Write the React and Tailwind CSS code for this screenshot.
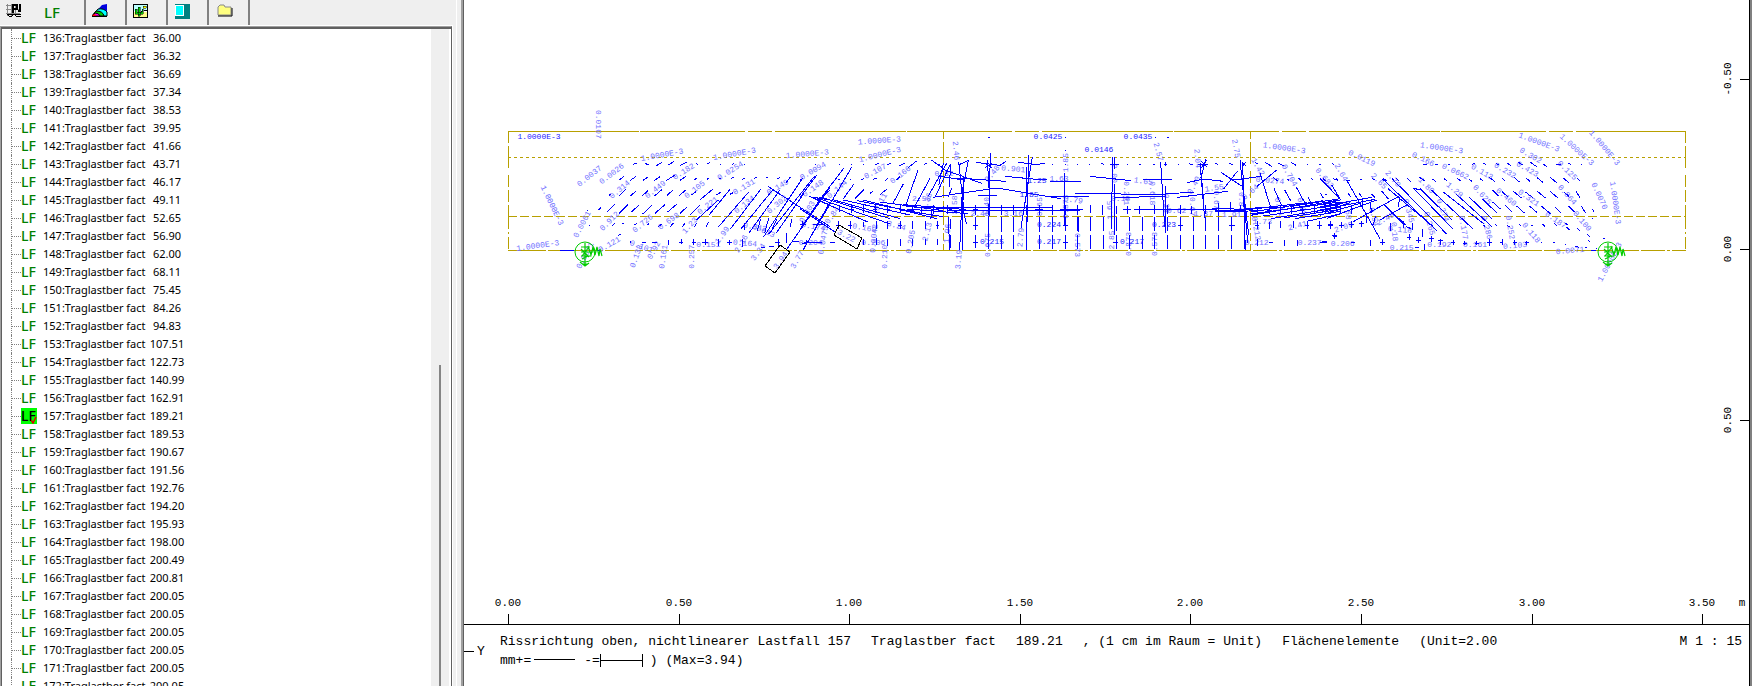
import { useState } from 'react';

const LOAD_CASES = [
  [136, '36.00'], [137, '36.32'], [138, '36.69'], [139, '37.34'], [140, '38.53'],
  [141, '39.95'], [142, '41.66'], [143, '43.71'], [144, '46.17'], [145, '49.11'],
  [146, '52.65'], [147, '56.90'], [148, '62.00'], [149, '68.11'], [150, '75.45'],
  [151, '84.26'], [152, '94.83'], [153, '107.51'], [154, '122.73'], [155, '140.99'],
  [156, '162.91'], [157, '189.21'], [158, '189.53'], [159, '190.67'], [160, '191.56'],
  [161, '192.76'], [162, '194.20'], [163, '195.93'], [164, '198.00'], [165, '200.49'],
  [166, '200.81'], [167, '200.05'], [168, '200.05'], [169, '200.05'], [170, '200.05'],
  [171, '200.05'], [172, '200.05'],
];

// Each zone of the beam has its own origin; its coordinates count thirds of a plot unit.
// Labels are [text, centre x, centre y, angle].
const ZONES = [
  {
    x: 490,
    y: 90,
    cracks: `M430 223l10-4M466 221l10 3M499 227l16-9M533 226l20-12M571 226l20-10M617 220l7 3M650 222l10-4M690 222h4M727 223l5-3M762 222h3M975 222h3
      M387 270l14-10M421 271l18-12M459 271l14-9M493 272l18-13M527 273l28-18M569 272l18-13M611 270l9-5M650 269l6-4M686 268l6-4M722 266l10-4M757 268l9-5M793 265l7-4M829 263l6-3M860 268l10-5M888 278l14-18
      M357 316l7-4M386 319l22-22M421 318l18-16M455 319l19-17M493 318l24-20M530 317l20-18M567 318l20-18M604 315l14-10M631 329l38-32M680 315l14-10M720 313l9-5
      M325 360l7-6M352 366l22-24M387 370l26-26M424 366l22-20M458 372l28-26M495 370l30-26M533 366l28-24M570 370l22-20M600 374l30-28M619 390l66-60M658 374l62-76
      M290 360h4M298 405h3M328 358l4-6M367 408l6-8M397 402l6-4M433 404l8-4M470 406l8-6M505 410l10-8M541 410l10-12M577 410l8-10M614 410l6-12M649 410l6-14M385 436l8-4
      M686 410l90-104M722 416l90-118M752 418l96-118M776 430l94-130M820 442l118-178M836 432l138-174M858 430l84-120M890 478l130-186M940 480l80-144
      M835 290l185 120M957 318l63 27M970 322l50 8M985 330l35-30
      M420 452v6M455 456h14M486 458h14M536 450v14M574 448v14M568 456h12M611 448v16M605 456h12M645 448v18M637 456h18M684 448v20M718 450v16M712 456h14M757 448v22
      M812 472h14M838 470h14M864 446v24M856 456h14M910 454h18M936 460h16M970 458h24M812 386l-10 36M836 385l-12 44M860 388l-18 40M906 388l-6 24M930 404h18M937 394v20M970 404h30M888 430v28M762 400v20
      M210 481h42M322 481h10`,
    labels: [
      ['0.0107', 326, 103, 90], ['1.0000E-3', 516, 193, -10], ['1.0000E-3', 733, 190, -10], ['1.0000E-3', 952, 190, -5],
      ['0.0037', 297, 257, -38], ['0.0026', 364, 250, -38], ['0.182', 580, 243, -32], ['0.0254', 720, 241, -32], ['0.0094', 968, 241, -30],
      ['1.0000E-3', 188, 345, 64], ['0.314', 388, 297, -40], ['0.449', 495, 297, -38], ['0.105', 613, 297, -38], ['0.131', 761, 289, -30],
      ['0.149', 862, 290, -30], ['0.148', 968, 294, -35], ['0.0061', 275, 402, -62], ['0.912', 357, 392, -45], ['0.726', 457, 399, -40],
      ['0.698', 535, 392, -35], ['1.23', 598, 405, -48], ['0.221', 652, 345, -38], ['0.134', 762, 342, -38], ['0.302', 860, 342, -40],
      ['1.99', 695, 434, -55], ['0.642', 795, 410, 10], ['0.613', 822, 420, 25], ['1.0000E-3', 143, 465, -8], ['0.121', 357, 462, -30],
      ['0.101', 455, 468, 20], ['0.138', 437, 498, -70], ['0.92', 490, 480, -60], ['0.161', 518, 500, -82], ['0.257', 602, 500, -90],
      ['0.151', 655, 463, 0], ['0.164', 765, 458, 5], ['2.16', 752, 460, -60], ['3.34', 803, 485, -55], ['3.94', 870, 510, -55],
      ['3.77', 920, 508, -60], ['0.303', 950, 365, -60], ['0.204', 962, 455, 0], ['0.0475', 998, 450, -80], ['0.174', 970, 408, 10],
      ['0.0071', 284, 495, -62],
    ],
  },
  {
    x: 800,
    y: 110,
    cracks: `M117 162h3M153 163h4M190 163h3M226 165l10-5M262 164l12-6M298 168l18-10M325 172l25-19M372 163l8-4M394 150l36 25M414 163h6M475 165l33-15M528 157l72 9M600 166l18-12M655 157l57 7M712 164l23-5M757 162h3M795 162h4M565 82h4M795 82h3M796 120h3
      M0 210l10-6M115 207h4M150 207h4M182 210l10-4M218 208l12-4M255 212l10-8M290 210l10-10M280 278l30-56M318 284l36-104M345 288l45-83M385 258l55-98M405 262l45-97
      M0 262l50-66M60 268l72-94M10 418L156 170M0 358l62-92M130 266l32-44M165 266l27-28M210 250l10-6M240 254l20-16
      M0 296l105 70M30 260l173 76M46 262l224 80M64 262l206 64M95 268l205 58M130 270l200 45M172 272l193 38M190 270l220 56M240 276l190 26M310 284l160 12M318 290l180 8M320 297l185 14M300 300l130 20M60 262l-10 12
      M117 285v22M155 284v24M190 286v22M226 284v24M262 284v26M300 286v24M336 288v22M365 288v22M401 286v26M396 300l-4 28M441 286v26M430 290l40 16M150 297h12M220 297h12M258 297h12M331 300h12M395 297h12
      M115 333v24M108 346h14M150 333v24M143 345h14M190 336v16M228 334v24M262 334v24M300 333v24M293 345h14M338 333v24M375 334v22M412 333v24M408 345h10M450 326v30
      M20 390v14M12 398h40M90 397h14M58 397h8M190 386v20M228 384v22M262 386v22M300 386v22M337 386v22M375 386v18M413 386v20M450 375v40
      M447 232l6-70M446 320l2 100M476 155l16 150M505 150l-18 90l-8 180M490 200l-3 220M490 305l10 38M571 130l-6 285M562 150l6 100M686 135l-7 285M697 140l-34 213M679 170v90M794 190v155M430 160l-14 66
      M398 262l192-28l192 32M415 198l75 12M430 178l115 42M470 204l148 10M614 199l96 9h30M750 213h90M740 260h100M430 292l326 2M440 300h400M534 255h56M554 160l22 14M554 174l22-14M455 235l-10 25
      M526 284v30M518 298h16M565 282v32M604 284v30M640 284v30M679 284v30M718 284v30M706 297h24M757 286v30M750 300h14
      M526 320v40M518 345h16M565 320v45M604 320v45M640 320v45M679 320v45M718 320v45M757 320v45M796 326v38M788 345h16
      M526 376v38M518 397h16M565 376v42M604 376v42M640 376v42M679 376v42M718 376v42M757 376v42M796 376v42M788 397h16M835 320v45`,
    labels: [
      ['1.0000E-3', 238, 90, -4], ['1.0000E-3', 239, 132, -14], ['0.107', 225, 182, -28], ['0.166', 300, 193, -38], ['0.144', 110, 236, -40],
      ['0.84', 95, 315, -55], ['3.22', 140, 376, 28], ['0.169', 193, 352, 10], ['0.206', 220, 395, 0], ['0.0042', 220, 385, -85],
      ['0.210', 252, 440, -90], ['3.24', 290, 345, 15], ['0.205', 330, 395, -80], ['2.13', 380, 365, -75], ['2.58', 365, 265, 0],
      ['0.82', 432, 188, 0], ['2.46', 470, 122, 85], ['3.58', 462, 285, -90], ['1.06', 440, 370, -85], ['3.19', 474, 448, -85],
      ['2.46', 540, 310, 0], ['1.40', 558, 290, -90], ['0.675', 562, 405, -90], ['0.901', 640, 175, 5], ['1.63', 777, 205, 0],
      ['1.85', 794, 158, -90], ['3.16', 640, 308, 0], ['0.65', 718, 290, -90], ['2.79', 660, 382, -85], ['0.573', 794, 290, -90],
      ['0.79', 820, 268, 8], ['0.11', 240, 275, -60], ['0.48', 575, 190, -50], ['0.36', 378, 275, -70],
    ],
  },
  {
    x: 1060,
    y: 110,
    cracks: `M14 82h3M15 121h3M285 82h3M321 82h6M14 162h4M52 163h3M88 163h3M124 160l8 4M150 163h28M164 148v28M202 163h3M238 163h6M280 162h4M312 162h10M316 156v12M353 162h5M386 160l12 5M414 163h30M424 154l18 18M440 150l-16 24M466 160l8 4M508 160l10 5M546 158l12 10M558 156l-12 16
      M584 156l10 6M615 157l20 12M655 160l16 8M694 158l14 8M740 163h4M777 162h6M815 160l6 4
      M640 203l14 10M680 206l8 6M716 204l8 8M754 206l6 4M790 206l6 6M820 206l8 4M600 190l32 102M642 235l22 50M674 240l18 32M708 230l30 55M744 262l8 16M782 250l8 14M815 225l25 41M590 230l60-50
      M14 190v158M158 142l-4 216M162 142v20M163 222v153M302 156l12 194M316 228v142M420 160l14 165M438 148l-16 57M540 150l14 140l9 108M548 160l8 260M544 190l22 184M426 220l4 46
      M0 213h62M0 259h86M46 250l268 4M90 199l124 13M249 208h88M314 252l90-6M352 262l152-18M164 262l152-2M382 218l48-11l60 7M520 210l84-11M484 188l61 40M490 238l42-54M222 298h248M0 299h68M456 295l99 3M466 306l134-4M466 300h90
      M554 300l186-22M574 306l216-34M572 316l266-46M571 312l269-36M610 318l230-34M632 326l208-34M672 324l168-26M706 326l134-22M740 334l100-22M556 295l120-4M690 290l150-24
      M16 286v30M52 286v30M90 286v24M128 284v30M169 288v24M202 288v24M190 298h24M237 288v24M283 286v26M322 286v26M362 286v26M394 288v24M437 286v26M474 280v38M512 276v28M540 286v20
      M592 290v24M628 288v24M660 288v20M694 286v26M726 288v22M762 286v24M796 282v26M830 280v20M620 300h16M720 298h14M824 292h14
      M16 322v42M8 346h16M52 322v42M91 322v42M130 322v42M169 322v42M208 322v42M246 322v42M283 322v42M322 322v42M362 322v42M354 346h16M400 322v42M437 322v42M475 322v42M514 322v42M506 346h18M553 322v42
      M16 376v42M8 397h14M52 376v42M91 376v42M130 376v42M169 376v42M160 397h14M208 376v42M246 376v42M283 376v42M322 376v42M362 376v42M400 376v42M437 376v42M475 376v42M514 376v42M553 376v42
      M592 334v24M586 345h12M628 336v22M662 334v20M700 334v20M742 334v24M736 345h12M778 333v24M770 345h14M811 333v22M804 342h14
      M592 388v20M626 397h14M674 390v18M712 390v18M786 394h14M824 370v16M818 378h14`,
    labels: [
      ['2.57', 297, 125, 75], ['2.04', 414, 145, 85], ['2.75', 530, 115, 80], ['1.0000E-3', 673, 112, 8], ['1.65', 250, 212, 8],
      ['2.00', 165, 190, 90], ['0.291', 200, 250, 90], ['0.618', 278, 250, 90], ['1.65', 148, 300, -90], ['0.62', 350, 300, 0],
      ['0.67', 398, 290, 90], ['0.67', 470, 270, 90], ['1.55', 462, 232, -8], ['1.37', 430, 308, 0], ['1.91', 515, 312, 0],
      ['0.573', 53, 405, 90], ['0.573', 204, 402, -90], ['0.573', 282, 402, -90], ['2.85', 152, 390, -90], ['0.0274', 630, 210, 5],
      ['0.704', 690, 195, 60], ['0.683', 795, 203, 50], ['1.42', 595, 170, 60], ['0.212', 590, 355, 80], ['0.212', 590, 395, 0],
      ['0.237', 749, 395, 0], ['2.41', 712, 345, -15], ['1.73', 607, 332, 0], ['0.64', 570, 245, -40], ['0.40', 400, 225, -60],
      ['0.38', 322, 280, 90], ['0.87', 545, 275, 90], ['0.11', 660, 290, 75], ['0.09', 728, 290, 75], ['0.15', 182, 264, 0],
    ],
  },
  {
    x: 1320,
    y: 110,
    cracks: `M308 163h12M345 163h10M383 162h6M420 162h4M456 164l8-4M490 160l8 4M528 160l10 6M562 160l10 6M594 156l16 10M630 156l20 14M670 162l10 8M708 162h14M745 160l8 4M783 162h3
      M10 208l8 5M48 206l6 5M85 210h6M120 207h5M155 203l8 7M190 206l10 6M228 203l8 10M262 206l10 8M298 202l16 10M335 206l12 8M372 206l10 6M410 204l12 8M446 206l10 8M480 206l10 6M508 202l18 14M545 204l10 8M582 202l16 14M618 204l12 10M650 202l20 16M690 202l20 16M730 204l16 14M772 206l8 6
      M184 242l22 26M188 207l162 155M216 206l164 166M204 236l136 114M240 230l26 26M280 234l120 124M300 236l96 94M334 240l124 116M370 246l122 96M408 252l108 98M446 260l70 66M488 268l44 42M80 210l100 176M190 282l64 64M216 308l42 36M300 240l-14-4M0 205l64 66
      M518 240l18 18M545 244l20 18M580 244l24 20M616 246l24 18M652 244l24 20M690 244l24 20M732 246l16 14M768 244l12 18M15 252h6M48 250l6 8M85 250l6 10M118 250l6 10M155 252l10 10
      M518 276l24 22M556 286l20 20M590 288l24 22M628 288l24 20M664 288l28 24M704 290l18 18M745 288l18 18M784 288l12 20M816 296l6 8M816 326h4M850 384h4
      M488 344l8 6M524 342l8 6M560 345l10 6M596 342l8 5M632 344l8 5M668 342l8 8M702 340l8 6M736 340l8 5M740 352l8 8M772 356l8 6M800 372l10 8M804 390l6 6M764 408l12 4M796 412h4M664 398h3M700 398h4M735 402h4M828 414h3
      M0 284l60-14M0 290l155-28M0 300l165-32M20 326l150-56M0 316l120-36M0 294l90-20M0 308l90-30M100 335l136-76M134 316l46-26M180 330l82-46
      M0 345h6M30 333v24M24 345h14M65 336v18M58 345h14M42 370v18M36 377h14M94 334v20M88 342h14M118 340h14M124 332v20M0 397h20M92 397h14M152 390v18M186 388v18M180 397h14M210 340v24M250 333v22M278 340v20M258 350l16 6M268 372v18M260 382h14M295 382v18M288 390h14M306 358v22M334 378v18M328 386h14M284 412h14M313 402v18M355 392h14M362 388v16M400 390v16M392 398h14M434 392v14M428 400h12M470 392v14M464 400h12M508 388v20M502 398h14M546 388v18M540 398h10M584 390v16M578 398h14M620 392v12M614 398h12
      M30 285v28M62 285v24M94 285v26M128 268v30M150 280l6 30M138 310v30M240 260l-6 30M160 345l6-26M814 421h14`,
    labels: [
      ['0.0119', 126, 143, 25], ['0.166', 310, 146, 25], ['1.0000E-3', 365, 112, 8], ['1.0000E-3', 658, 95, 20], ['1.0000E-3', 772, 118, 42],
      ['1.0000E-3', 855, 112, 50], ['0.302', 633, 135, 30], ['0.0662', 407, 183, 25], ['0.113', 487, 184, 30], ['0.232', 556, 180, 30],
      ['0.423', 623, 176, 30], ['0.125', 743, 180, 45], ['2.64', 65, 186, 60], ['2.65', 178, 212, 45], ['2.70', 220, 205, 50],
      ['1.80', 320, 225, 45], ['1.29', 405, 238, 40], ['0.625', 488, 253, 48], ['0.460', 560, 260, 40], ['0.321', 627, 262, 35],
      ['0.864', 743, 253, 48], ['0.0070', 840, 257, 65], ['1.0000E-3', 888, 278, 82], ['0.187', 708, 328, 35], ['0.100', 788, 332, 50],
      ['0.118', 635, 367, 50], ['0.252', 572, 352, 80], ['0.286', 502, 352, 75], ['0.177', 432, 353, 80], ['0.274', 370, 300, 70],
      ['0.265', 330, 340, 75], ['0.345', 268, 302, 75], ['0.18', 225, 365, 85], ['0.54', 163, 320, 75], ['0.68', 85, 300, 85],
      ['2.48', 195, 325, -30], ['2.09', 70, 350, -20], ['0.118', 240, 357, 5], ['0.206', 68, 398, 0], ['0.215', 245, 410, 0],
      ['0.192', 358, 402, 0], ['0.161', 465, 402, 0], ['0.103', 585, 405, -5], ['0.0071', 750, 420, -5], ['1.0000E-3', 868, 455, -62],
    ],
  },
];

// Values on horizontal elements, [text, centre x, centre y] in plot units.
const PLAIN_VALUES = [
  ['1.0000E-3', 539, 137], ['0.0425', 1048, 137], ['0.0435', 1138, 137], ['0.0146', 1099, 150],
  ['1.25', 1037, 181], ['1.85', 1029, 195], ['0.224', 1049, 225], ['0.217', 1049, 242],
  ['0.215', 992, 242], ['0.223', 1164, 225], ['0.217', 1132, 242],
];

const X_TICKS = [
  ['0.00', 508], ['0.50', 679], ['1.00', 849], ['1.50', 1020],
  ['2.00', 1190], ['2.50', 1361], ['3.00', 1532], ['3.50', 1702],
];

const Y_TICKS = [['-0.50', 79], ['0.00', 249], ['0.50', 420]];

function GridIcon() {
  return (
    <svg width="16" height="14" viewBox="0 0 16 14" shapeRendering="crispEdges" fill="none">
      <path d="M0 1.5h12M0 5.5h13M0 9.5h14M1.5 0v12M5.5 0v12M9.5 0v12" stroke="#888" />
      <path d="M7 0v9M8 1h4M11 1v4M8 5h4M14 0v7M12 7h3" stroke="#000" strokeWidth="2" />
      <path d="M1 10l2 2h3l2-2l2 2h5M2 10h13" stroke="#000" />
    </svg>
  );
}

function ContourIcon() {
  return (
    <svg width="16" height="13" viewBox="0 0 16 13">
      <path d="M0 12L10 1l5-1v12z" fill="#0000e0" />
      <path d="M0 12L6 5q6-1 9 3v4z" fill="#0ff" stroke="#000" />
      <path d="M0 12l4-5q7 0 8 5z" fill="#0c0" stroke="#000" />
      <path d="M0 12l3-3q4 0 5 3z" fill="#f0f" stroke="#000" />
      <path d="M0 12l2-2q2 0 2 2z" fill="#f00" />
      <path d="M0 12.5h15" stroke="#000" />
    </svg>
  );
}

function CactusIcon() {
  return (
    <svg width="16" height="15" viewBox="0 0 16 15" shapeRendering="crispEdges">
      <path d="M0.5 0.5h14v13h-14z" fill="#fff" stroke="#000" />
      <path d="M1 1h13v6H1z" fill="#bff" />
      <path d="M1 8h13v5H1z" fill="#ff8" />
      <path d="M8 7.5h2M11 6.5h3" stroke="#000" fill="none" />
      <path d="M10 2h3v2h-3z" fill="#ff0" stroke="#000" strokeWidth="0.5" />
      <path d="M5 3h2v9H5zM2 5h2v3h5V5h1v5H2z" fill="#0c0" stroke="#000" strokeWidth="0.5" />
    </svg>
  );
}

function PanelIcon() {
  return (
    <svg width="15" height="15" viewBox="0 0 15 15" shapeRendering="crispEdges">
      <path d="M0 0h15v15H0z" fill="#008080" />
      <path d="M0 1h9v11H0z" fill="#fff" />
      <path d="M1 2h7v9H1z" fill="#0ff" />
    </svg>
  );
}

function FolderIcon() {
  return (
    <svg width="16" height="13" viewBox="0 0 16 13">
      <path d="M1 11V3l2-2h4l1 2h6v8z" fill="#ffff80" stroke="#888" />
      <path d="M1 12h14V4" fill="none" stroke="#000" />
    </svg>
  );
}

const TABS = [
  { id: 'system', label: 'System', icon: GridIcon, className: 'w-[41px] pl-[6px]' },
  { id: 'loadcase', label: 'Lastfall', className: 'w-[45px] pl-[3px]' },
  { id: 'contour', label: 'Isolinien', icon: ContourIcon, className: 'w-[41px] pl-[6px]' },
  { id: 'view', label: 'Ansicht', icon: CactusIcon, className: 'w-[41px] pl-[6px]' },
  { id: 'layout', label: 'Layout', icon: PanelIcon, className: 'w-[41px] pl-[7px]' },
  { id: 'files', label: 'Dateien', icon: FolderIcon, className: 'w-[41px] pl-[8px]' },
];

function TabBar() {
  return (
    <div className="flex h-[25px] shrink-0">
      {TABS.map(({ id, label, icon: Icon, className }) => (
        <button
          key={id}
          type="button"
          aria-label={label}
          className={`flex h-[25px] items-start pt-1 ${className} ${id === 'system' ? '' : 'border-r-2 border-[#808080]'}`}
        >
          {Icon ? <Icon /> : <span className="text-[15px] leading-4 font-medium text-[#008000]">LF</span>}
        </button>
      ))}
    </div>
  );
}

function LoadCaseRow({ number, factor, selected, onSelect }) {
  return (
    <li className="flex h-[18px] items-center border-l border-dotted border-[#808080]">
      <span className="w-[9px] border-t border-dotted border-[#808080]" />
      <button type="button" onClick={onSelect} className="flex h-[18px] items-center whitespace-pre">
        <span
          className={`relative flex h-4 w-4 items-center text-[14px] leading-4 font-medium ${selected ? 'bg-[#00ff00] text-black' : 'text-[#008000]'}`}
        >
          LF
          {selected && (
            <svg className="absolute right-0 bottom-0" width="6" height="8" viewBox="0 0 6 8">
              <path d="M0 4l2 3l3-6" fill="none" stroke="#e00000" strokeWidth="1.5" />
            </svg>
          )}
        </span>
        <span className="ml-[6px] w-[104px] text-left">{number}:Traglastber fact</span>
        <span className="w-10 text-center">{factor}</span>
      </button>
    </li>
  );
}

function Support({ x }) {
  return (
    <g transform={`translate(${x} 252)`} fill="none" stroke="#00cc00">
      <circle r="10" />
      <path d="M0-9V14M-4-5H5M-4 0H8M-4 4H6M-5 10l5 4l4-3M-3 12h6M-4-3l8 8M4-5l-7 9M3-6l3 9l2-8l2 8l2-8l2 9l1-7l2 7M-3 7l6-3" strokeWidth="1.2" />
    </g>
  );
}

function Plot() {
  return (
    <svg viewBox="464 0 1285 625" className="block h-auto w-full shrink-0" fontFamily="'Liberation Mono', monospace" role="img" aria-label="Rissrichtung oben">
      <g stroke="#b8a000" fill="none" shapeRendering="crispEdges">
        <path d="M508 131.5H1686" strokeDasharray="131 1 105 3 24 3" />
        <path d="M508 157.5H1686" strokeDasharray="3 3" />
        <path d="M508 216.5H1686" strokeDasharray="9 3" />
        <path d="M508 250.5H1686" strokeDasharray="38 2 24 2 24 2 3 2" />
        <path d="M508.5 131v120M1685.5 131v120" strokeDasharray="12 3 22 7 12 3 12 3 24 3 2 3" />
        <path d="M943.5 131v120M1250.5 131v120" strokeDasharray="8 3 22 7 12 3 12 3 24 3 2 3" />
      </g>

      {ZONES.map((zone) => (
        <g key={zone.x}>
          <g fontSize="8" fill="#7070ff" textAnchor="middle">
            {zone.labels.map(([text, x, y, angle]) => (
              <text key={`${x}-${y}`} dy="3" transform={`translate(${zone.x + x / 3} ${zone.y + y / 3}) rotate(${angle})`}>
                {text}
              </text>
            ))}
          </g>
          <path
            d={zone.cracks}
            transform={`translate(${zone.x} ${zone.y}) scale(${1 / 3})`}
            fill="none"
            stroke="#0000ff"
            strokeWidth="3"
            shapeRendering="crispEdges"
          />
        </g>
      ))}

      <g fontSize="8" fill="#2020ff" textAnchor="middle">
        {PLAIN_VALUES.map(([text, x, y]) => (
          <text key={`${x}-${y}`} x={x} y={y + 2}>{text}</text>
        ))}
      </g>

      <path d="M780 245l10 7l-15 21l-10-7zM839 225l23 13l-5 11l-23-14z" fill="none" stroke="#000" shapeRendering="crispEdges" />
      <Support x={585} />
      <Support x={1608} />

      <g fontSize="11" fill="#000" textAnchor="middle">
        {X_TICKS.map(([text, x]) => <text key={text} x={x} y="606">{text}</text>)}
        <text x="1742" y="606">m</text>
        {Y_TICKS.map(([text, y]) => (
          <text key={text} transform={`translate(1731 ${y}) rotate(-90)`}>{text}</text>
        ))}
      </g>
      <g stroke="#000" shapeRendering="crispEdges">
        {X_TICKS.map(([text, x]) => <path key={text} d={`M${x + 0.5} 614v10`} />)}
        {Y_TICKS.map(([text, y]) => <path key={text} d={`M1740 ${y + 0.5}h9`} />)}
        <path d="M464 624.5h1285" />
      </g>
    </svg>
  );
}

function Legend() {
  return (
    <footer className="flex grow font-['Liberation_Mono',monospace] text-[13px] leading-[19px] whitespace-pre">
      <div className="flex w-9 shrink-0 items-start pt-[17px]">
        <span className="mt-[9px] mr-[3px] w-[10px] border-t border-black" />
        Y
      </div>
      <div className="grow pt-[7px]">
        <div className="flex gap-5">
          <span>Rissrichtung oben, nichtlinearer Lastfall 157</span>
          <span>Traglastber fact</span>
          <span>189.21</span>
          <span>, (1 cm im Raum = Unit)</span>
          <span>Flächenelemente</span>
          <span>(Unit=2.00</span>
        </div>
        <div className="flex items-center">
          <span>mm+=</span>
          <svg width="53" height="14" shapeRendering="crispEdges" stroke="#000">
            <path d="M3 5.5h41" />
          </svg>
          <span>-=</span>
          <svg width="50" height="14" shapeRendering="crispEdges" stroke="#000">
            <path d="M0.5 0v13M42.5 0v13M0 6.5h43" />
          </svg>
          <span>) (Max=3.94)</span>
        </div>
      </div>
      <span className="pt-[7px] pr-[7px]">M 1 : 15</span>
    </footer>
  );
}

export default function App() {
  const [selected, setSelected] = useState(157);

  return (
    <div className="flex h-screen overflow-hidden bg-white text-black">
      <aside className="flex w-[464px] shrink-0 border-r border-[#606060] bg-[#efefef] font-['Noto_Sans',sans-serif] text-[11px]">
        <div className="flex min-w-0 grow flex-col">
          <TabBar />
          <div className="mr-[3px] flex min-h-0 grow border-t border-r border-white">
            <div className="flex min-h-0 grow border-t border-r border-l border-[#a0a0a0] border-r-[#606060]">
              <div className="flex min-h-0 grow border-t-2 border-l border-[#606060]">
                <ul className="grow overflow-hidden bg-white pl-[9px]">
                  {LOAD_CASES.map(([number, factor]) => (
                    <LoadCaseRow
                      key={number}
                      number={number}
                      factor={factor}
                      selected={number === selected}
                      onSelect={() => setSelected(number)}
                    />
                  ))}
                </ul>
                <div className="flex w-5 flex-col items-center border-r-2 border-white">
                  <div className="mt-[336px] w-0.5 grow bg-[#858585]" />
                </div>
              </div>
            </div>
          </div>
        </div>
        <div className="w-[7px] border-r-2 border-l border-[#a0a0a0] border-l-white" />
      </aside>

      <main className="flex min-w-0 grow flex-col border-r border-black">
        <Plot />
        <Legend />
      </main>
      <div className="w-0.5 shrink-0 bg-[#808080]" />
    </div>
  );
}
